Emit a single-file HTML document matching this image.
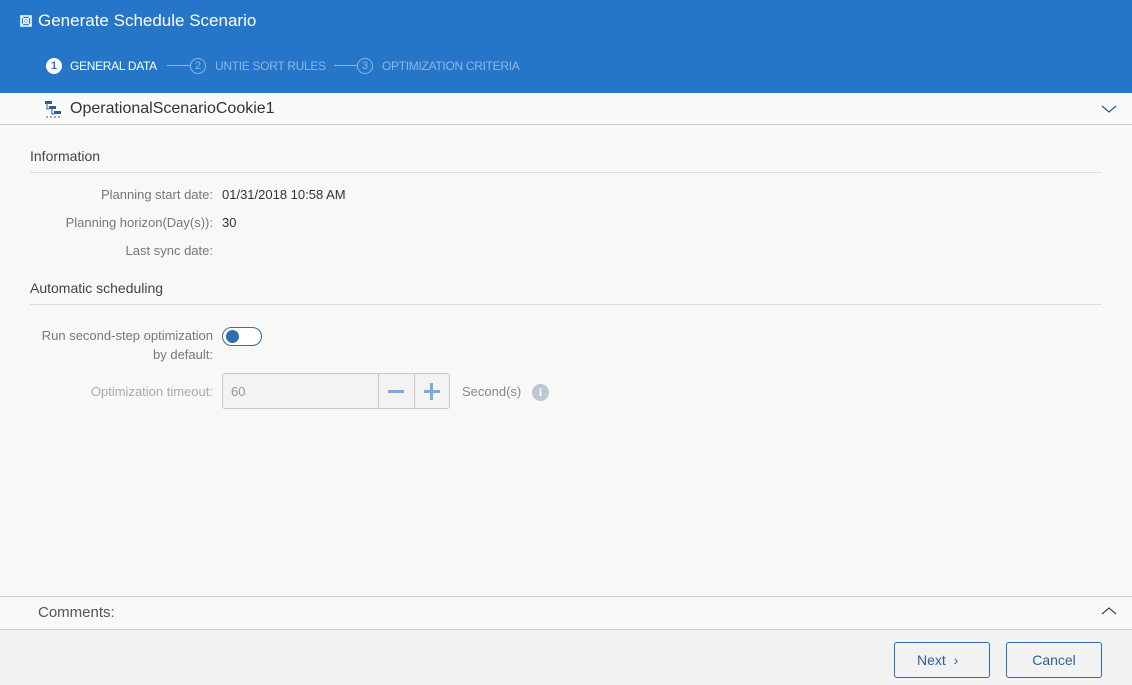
<!DOCTYPE html>
<html><head><style>
*{box-sizing:border-box;margin:0;padding:0}
body{width:1132px;height:685px;overflow:hidden;background:#f8f8f7;font-family:"Liberation Sans",sans-serif;color:#333;position:relative}
.a{position:absolute}
.lbl{position:absolute;right:919px;font-size:13px;color:#777;text-align:right;white-space:nowrap}
.val{position:absolute;left:222px;font-size:13px;color:#333}
</style></head><body>
<div class="a" style="left:0;top:0;width:1132px;height:93px;background:#2576c8"></div>
<svg class="a" style="left:20px;top:15px" width="12" height="12" viewBox="0 0 12 12"><rect x="1" y="1" width="10" height="10" fill="none" stroke="#fff" stroke-width="1.5"/><circle cx="6" cy="6" r="2.5" fill="none" stroke="#fff" stroke-width="1.3"/><path d="M1 1L11 11M11 1L1 11" stroke="#fff" stroke-width="1"/></svg>
<div class="a" style="left:38px;top:11px;font-size:17px;color:#fff">Generate Schedule Scenario</div>
<div class="a" style="left:46px;top:58px;width:16px;height:16px;border-radius:50%;background:#fff;color:#2576c8;font-size:11px;text-align:center;line-height:16px;font-weight:bold">1</div>
<div class="a" style="left:70px;top:59px;font-size:12px;color:#fff;letter-spacing:-.3px">GENERAL DATA</div>
<div class="a" style="left:167px;top:65px;width:24px;height:1px;background:#8fb6e3"></div>
<div class="a" style="left:190px;top:58px;width:16px;height:16px;border-radius:50%;border:1px solid #8fb6e3;color:#8fb6e3;font-size:11px;text-align:center;line-height:14px">2</div>
<div class="a" style="left:215px;top:59px;font-size:12px;color:#8fb6e3;letter-spacing:-.3px">UNTIE SORT RULES</div>
<div class="a" style="left:334px;top:65px;width:24px;height:1px;background:#8fb6e3"></div>
<div class="a" style="left:357px;top:58px;width:16px;height:16px;border-radius:50%;border:1px solid #8fb6e3;color:#8fb6e3;font-size:11px;text-align:center;line-height:14px">3</div>
<div class="a" style="left:382px;top:59px;font-size:12px;color:#8fb6e3;letter-spacing:-.3px">OPTIMIZATION CRITERIA</div>

<div class="a" style="left:0;top:93px;width:1132px;height:32px;background:#fafaf9;border-bottom:1px solid #ccc"></div>
<svg class="a" style="left:45px;top:100px" width="18" height="18" viewBox="0 0 18 18"><rect x="0" y="1" width="7" height="3" fill="#2f5f98"/><rect x="4" y="6" width="7" height="3" fill="#2f5f98"/><rect x="9" y="11" width="7" height="3" fill="#2f5f98"/><path d="M2 4V9H4M7 9V14H9" stroke="#2f5f98" fill="none"/><path d="M1 17h2M5 17h2M9 17h2M13 17h2" stroke="#2f5f98"/></svg>
<div class="a" style="left:70px;top:100px;font-size:16px;color:#333">OperationalScenarioCookie1</div>
<svg class="a" style="left:1101px;top:104px" width="16" height="10"><path d="M1 2L8 8L15 2" fill="none" stroke="#2f5f98" stroke-width="1.4"/></svg>

<div class="a" style="left:30px;top:148px;font-size:14px;color:#444">Information</div>
<div class="a" style="left:30px;top:172px;width:1072px;height:1px;background:#ddd"></div>
<div class="lbl" style="top:187px">Planning start date:</div><div class="val" style="top:187px">01/31/2018 10:58 AM</div>
<div class="lbl" style="top:215px">Planning horizon(Day(s)):</div><div class="val" style="top:215px">30</div>
<div class="lbl" style="top:243px">Last sync date:</div>
<div class="a" style="left:30px;top:280px;font-size:14px;color:#444">Automatic scheduling</div>
<div class="a" style="left:30px;top:304px;width:1072px;height:1px;background:#ddd"></div>
<div class="lbl" style="top:326px;line-height:19px">Run second-step optimization<br>by default:</div>
<div class="a" style="left:222px;top:327px;width:40px;height:19px;border:1px solid #2f6db0;border-radius:10px;background:#fff"></div>
<div class="a" style="left:226px;top:330px;width:13px;height:13px;border-radius:50%;background:#2f6db0"></div>
<div class="lbl" style="top:384px;color:#aaa">Optimization timeout:</div>
<div class="a" style="left:222px;top:373px;width:228px;height:36px;border:1px solid #c8c8c8;border-radius:3px;background:#f3f3f3"></div>
<div class="a" style="left:231px;top:384px;font-size:13px;color:#999">60</div>
<div class="a" style="left:378px;top:373px;width:1px;height:36px;background:#c8c8c8"></div>
<div class="a" style="left:414px;top:373px;width:1px;height:36px;background:#c8c8c8"></div>
<div class="a" style="left:388px;top:390px;width:16px;height:3px;background:#7eaadb"></div>
<div class="a" style="left:424px;top:390px;width:16px;height:3px;background:#7eaadb"></div>
<div class="a" style="left:430px;top:383px;width:3px;height:17px;background:#7eaadb"></div>
<div class="a" style="left:462px;top:384px;font-size:13px;color:#888">Second(s)</div>
<div class="a" style="left:532px;top:384px;width:17px;height:17px;border-radius:50%;background:#bcc7d3;color:#fff;font-size:12px;font-weight:bold;text-align:center;line-height:17px;font-family:'Liberation Serif',serif">i</div>

<div class="a" style="left:0;top:596px;width:1132px;height:34px;border-top:1px solid #ccc;border-bottom:1px solid #ccc;background:#f8f8f7"></div>
<div class="a" style="left:38px;top:604px;font-size:15px;color:#555">Comments:</div>
<svg class="a" style="left:1101px;top:606px" width="16" height="10"><path d="M1 8L8 2L15 8" fill="none" stroke="#444" stroke-width="1.2"/></svg>
<div class="a" style="left:0;top:630px;width:1132px;height:55px;background:#f2f2f2"></div>
<div class="a" style="left:894px;top:642px;width:96px;height:36px;border:1px solid #2f6db0;border-radius:3px;font-size:14px;color:#2f5f98;line-height:34px;padding-left:22px">Next&nbsp;&nbsp;›</div>
<div class="a" style="left:1006px;top:642px;width:96px;height:36px;border:1px solid #2f6db0;border-radius:3px;font-size:14px;color:#2f5f98;line-height:34px;text-align:center">Cancel</div>
</body></html>
